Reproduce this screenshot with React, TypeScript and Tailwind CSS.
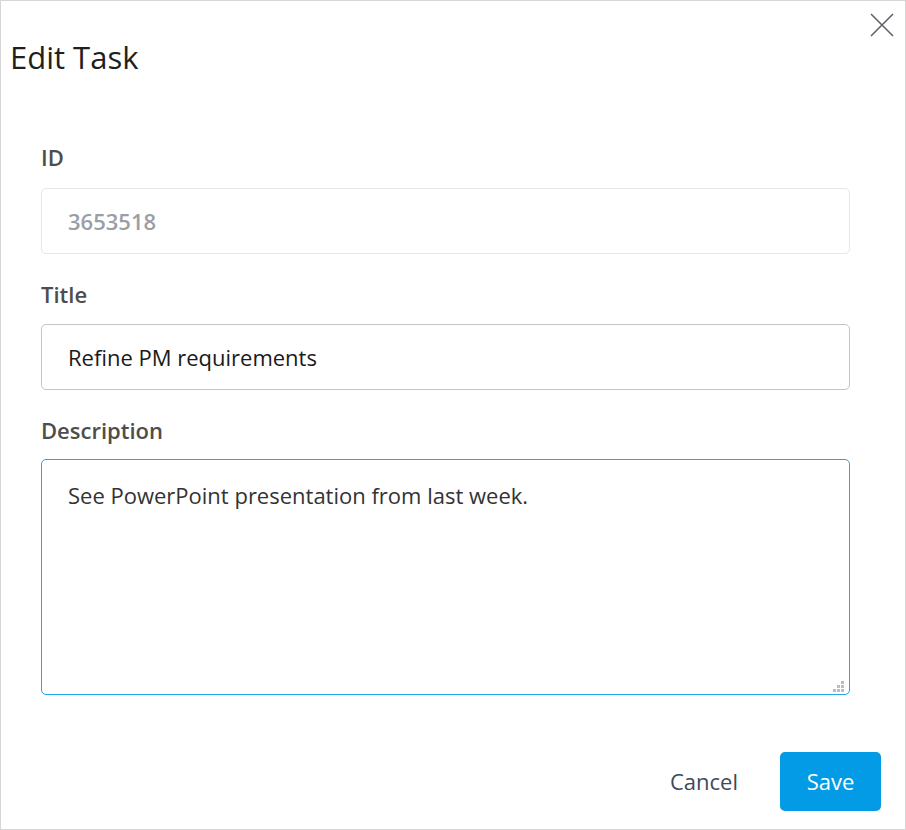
import React from "react";

export default function App() {
  const font = { fontFamily: '"Open Sans", "Noto Sans", sans-serif' };
  return (
    <div
      className="relative w-[906px] h-[830px] border border-[#d6d6d6] bg-white"
      style={font}
    >
      <button className="absolute right-[11px] top-[12px] w-[24px] h-[24px] flex items-center justify-center">
        <svg width="24" height="24" viewBox="0 0 24 24">
          <path d="M1 1 L23 23 M23 1 L1 23" stroke="#5f6368" strokeWidth="1.6" fill="none" />
        </svg>
      </button>
      <div className="pt-[34px] pl-[9px]">
        <h1 className="text-[31px] leading-[44px] text-[#1f1f1f] font-normal">Edit Task</h1>
      </div>
      <div className="pl-[40px] pt-[63px] w-[849px] flex flex-col">
        <label className="text-[22px] leading-[30px] font-semibold text-[#4d4d4d]">ID</label>
        <div className="mt-[16px] h-[66px] rounded-[5px] border border-[#e6e6e6] flex items-center px-[26px] text-[22px] font-semibold text-[#9a9ea6]">
          3653518
        </div>
        <label className="mt-[25px] text-[22px] leading-[30px] font-semibold text-[#4d4d4d]">Title</label>
        <div className="mt-[15px] h-[66px] rounded-[5px] border border-[#c4c4c4] flex items-center px-[26px] text-[22px] text-[#1a1a1a]">
          Refine PM requirements
        </div>
        <label className="mt-[25px] text-[22px] leading-[30px] font-semibold text-[#4d4d4d]">Description</label>
        <div className="relative mt-[14px] h-[236px] rounded-[5px] border border-[#22a7ec] px-[26px] pt-[20px] text-[22px] leading-[30px] text-[#333]">
          See PowerPoint presentation from last week.
          <svg className="absolute right-[5px] bottom-[2px]" width="11" height="11" viewBox="0 0 11 11">
            <rect x="8" y="0" width="3" height="3" fill="#bdbdbd" />
            <rect x="4" y="4" width="3" height="3" fill="#bdbdbd" />
            <rect x="8" y="4" width="3" height="3" fill="#bdbdbd" />
            <rect x="0" y="8" width="3" height="3" fill="#bdbdbd" />
            <rect x="4" y="8" width="3" height="3" fill="#bdbdbd" />
            <rect x="8" y="8" width="3" height="3" fill="#bdbdbd" />
          </svg>
        </div>
      </div>
      <div className="absolute right-[24px] top-[751px] flex items-center gap-[22px]">
        <button className="h-[59px] px-[20px] text-[22px] text-[#3b4a5c]">Cancel</button>
        <button className="h-[59px] w-[101px] rounded-[5px] bg-[#039be5] text-white text-[22px]">Save</button>
      </div>
    </div>
  );
}
